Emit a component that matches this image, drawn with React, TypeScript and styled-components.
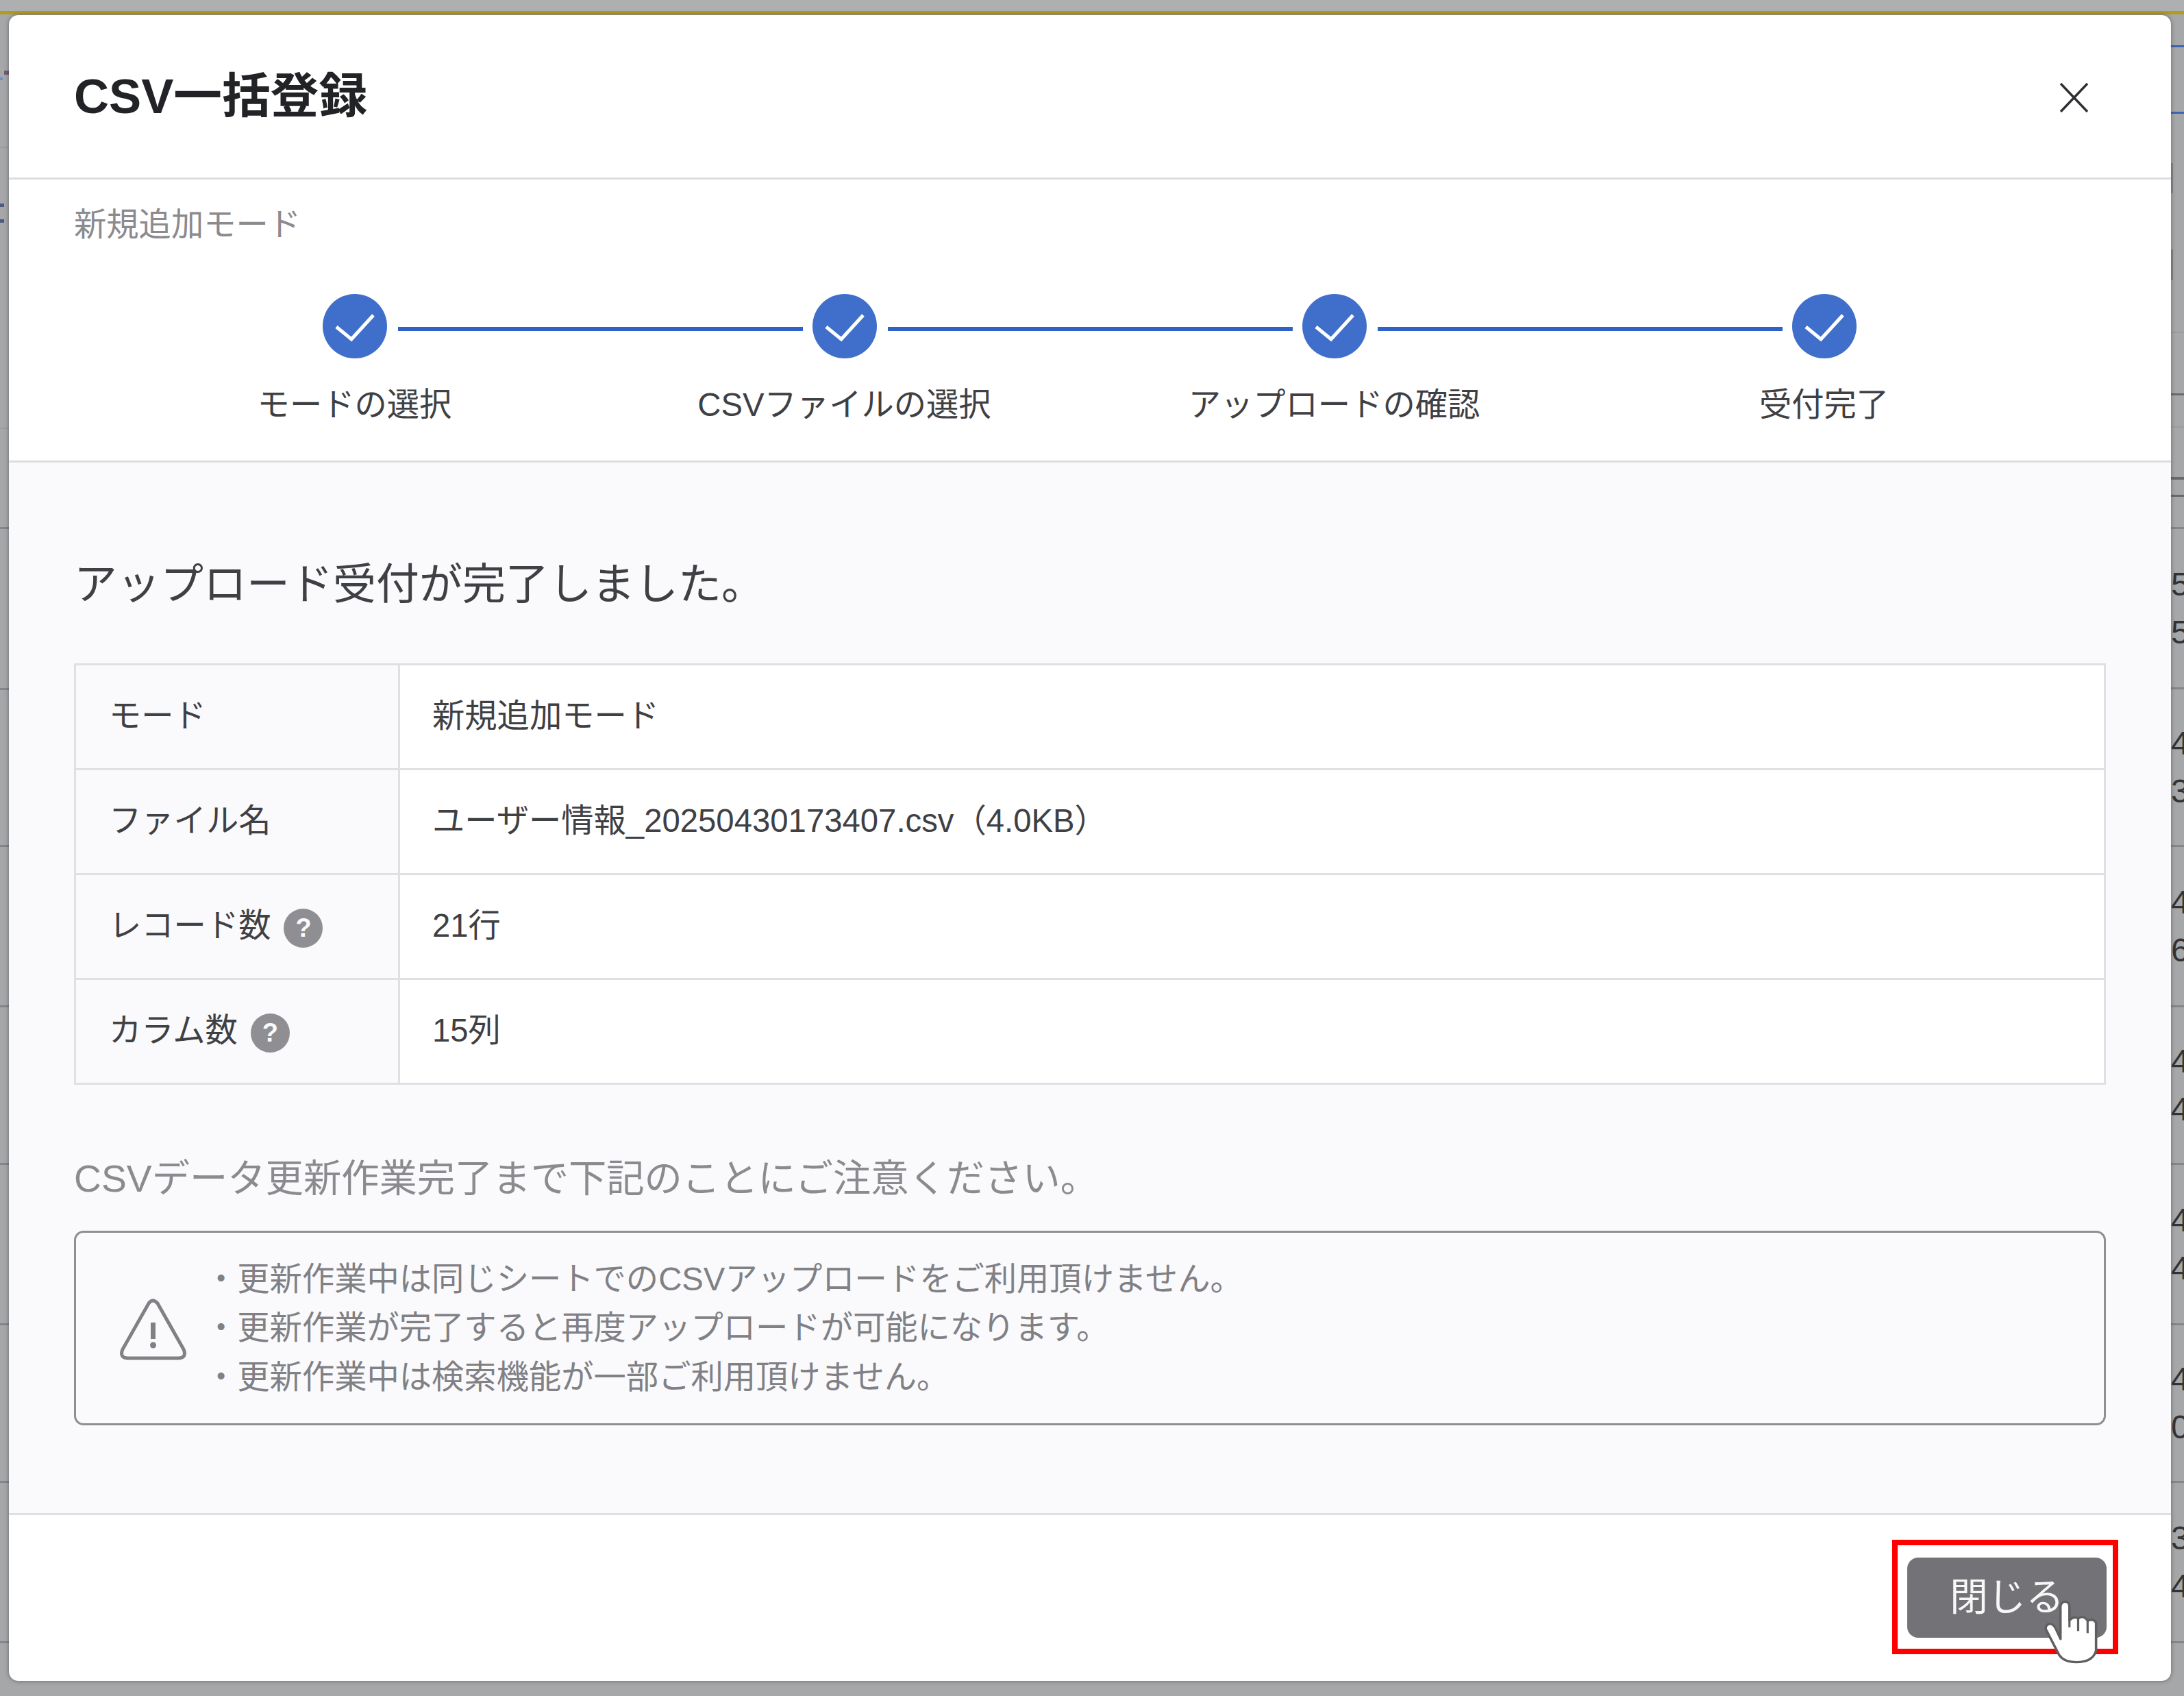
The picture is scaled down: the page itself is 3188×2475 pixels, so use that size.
// App.tsx
import styled, { createGlobalStyle } from 'styled-components';

const GlobalStyle = createGlobalStyle`
  html, body {
    margin: 0;
    padding: 0;
    background: #a6a7a9;
    overflow: hidden;
  }
  * {
    box-sizing: border-box;
  }
`;

const FONT = `"Liberation Sans", "Noto Sans CJK JP", sans-serif`;

const Backdrop = styled.div`
  position: relative;
  width: 3188px;
  height: 2475px;
  overflow: hidden;
  display: flex;
  flex-direction: column;
  background: #a6a7a9;
  font-family: ${FONT};
`;

const TopStrip = styled.div`
  height: 16px;
  background: #aeafb1;
`;

const GoldLine = styled.div`
  height: 5px;
  background: #b39b1e;
`;

const Rails = styled.div`
  flex: 1;
  display: flex;
  justify-content: space-between;
`;

const Rail = styled.div<{ $width: number }>`
  width: ${(p) => p.$width}px;
  display: flex;
  flex-direction: column;
  overflow: hidden;
`;

const Segment = styled.div<{ $height: number; $tick?: boolean }>`
  height: ${(p) => p.$height}px;
  display: flex;
  flex-direction: column;
  border-left: ${(p) => (p.$tick ? '3px solid #88898b' : 'none')};
`;

const Digits = styled.div`
  flex: 1;
  display: flex;
  flex-direction: column;
  justify-content: center;
  font-size: 48px;
  line-height: 70px;
  color: #333336;
`;

const Rule = styled.div<{ $color: string; $size: number; $width?: number; $right?: boolean }>`
  height: ${(p) => p.$size}px;
  width: ${(p) => (p.$width ? `${p.$width}px` : '100%')};
  margin-left: ${(p) => (p.$right ? 'auto' : '0')};
  margin-top: auto;
  background: ${(p) => p.$color};
  flex-shrink: 0;
`;

const Modal = styled.div`
  position: absolute;
  left: 13px;
  top: 22px;
  width: 3156px;
  height: 2431px;
  display: flex;
  flex-direction: column;
  background: #fff;
  border-radius: 14px;
  box-shadow: 0 0 6px rgba(50, 50, 55, 0.55);
  overflow: hidden;
`;

const Header = styled.header`
  height: 240px;
  flex-shrink: 0;
  display: flex;
  align-items: flex-start;
  justify-content: space-between;
  padding: 91px 121px 0 95px;
  border-bottom: 3px solid #dcdde0;
`;

const Title = styled.h1`
  margin: 0;
  font-size: 70.7px;
  line-height: 56px;
  font-weight: 700;
  color: #222326;
`;

const CloseButton = styled.button`
  width: 41px;
  height: 43px;
  margin-top: 8px;
  padding: 0;
  border: none;
  background: none;
  display: block;
`;

const StepSection = styled.section`
  height: 413px;
  flex-shrink: 0;
  border-bottom: 3px solid #dcdde0;
`;

const ModeName = styled.div`
  padding: 36px 0 0 95px;
  font-size: 47.3px;
  line-height: 60px;
  color: #8a8a8f;
`;

const Track = styled.div`
  display: flex;
  align-items: center;
  margin-top: 71px;
  padding-left: 458px;
`;

const StepDot = styled.svg`
  width: 94px;
  height: 94px;
  flex-shrink: 0;
`;

const Connector = styled.div`
  width: 591px;
  height: 6px;
  margin: 7px 14px 0 16px;
  background: #2f62c6;
`;

const StepLabels = styled.div`
  display: grid;
  grid-template-columns: repeat(4, 715px);
  margin-top: 38px;
  padding-left: 147px;
`;

const StepLabel = styled.div`
  text-align: center;
  font-size: 47.3px;
  line-height: 60px;
  color: #3f4044;
`;

const Body = styled.main`
  flex: 1;
  padding: 137px 95px 0 95px;
  background: #fafafc;
`;

const Lead = styled.h2`
  margin: 0;
  font-size: 63px;
  font-weight: 400;
  line-height: 80px;
  color: #3f4044;
`;

const InfoTable = styled.table`
  width: 100%;
  margin-top: 76px;
  border-collapse: collapse;
  table-layout: fixed;
  border: 3px solid #dfe0e4;
`;

const LabelCell = styled.th`
  width: 473px;
  height: 153px;
  padding: 0 0 12px 48px;
  border: 3px solid #dfe0e4;
  background: #fafafc;
  text-align: left;
  font-size: 47.3px;
  font-weight: 400;
  color: #3f4044;
`;

const LabelInner = styled.span`
  display: inline-flex;
  align-items: center;
  gap: 19px;
`;

const ValueCell = styled.td`
  padding: 0 0 12px 47px;
  border: 3px solid #dfe0e4;
  background: #fff;
  font-size: 47.3px;
  color: #3f4044;
`;

const HelpBadge = styled.span`
  width: 57px;
  height: 57px;
  margin-top: 17px;
  border-radius: 50%;
  background: #8e8e93;
  color: #fafafc;
  display: inline-flex;
  align-items: center;
  justify-content: center;
  font-size: 38px;
  font-weight: 700;
`;

const NoteTitle = styled.p`
  margin: 97px 0 0;
  font-size: 55.3px;
  line-height: 80px;
  color: #8a8a8f;
`;

const WarningBox = styled.div`
  height: 284px;
  margin-top: 36px;
  padding-left: 64px;
  display: flex;
  align-items: center;
  gap: 27px;
  border: 3px solid #8e8e93;
  border-radius: 14px;
`;

const WarningIcon = styled.svg`
  width: 97px;
  height: 90px;
  flex-shrink: 0;
  margin-top: 4px;
`;

const WarningList = styled.div`
  font-size: 47.3px;
  line-height: 71.5px;
  color: #808085;
`;

const Footer = styled.footer`
  height: 245px;
  flex-shrink: 0;
  display: flex;
  justify-content: flex-end;
  align-items: flex-start;
  padding: 36px 77px 0 0;
  border-top: 3px solid #dfe0e4;
`;

const Highlight = styled.div`
  position: relative;
  width: 330px;
  height: 167px;
  padding: 18px 9px 16px 14px;
  border: 8px solid #ff0000;
`;

const CloseAction = styled.button`
  display: block;
  width: 291px;
  height: 117px;
  padding: 0 0 11px;
  border: none;
  border-radius: 16px;
  background: #737377;
  color: #f7f7f7;
  font-family: ${FONT};
  font-size: 55.5px;
`;

const Pointer = styled.svg`
  position: absolute;
  left: 213px;
  top: 79px;
  width: 83px;
  height: 95px;
`;

type Line = {
  to: number;
  color?: string;
  size?: number;
  width?: number;
  right?: boolean;
  tick?: boolean;
  digits?: string[];
};

const TABLE_LINE = '#85868a';

const leftLines: Line[] = [
  { to: 109, color: '#6f5d70', size: 6, width: 7, right: true },
  { to: 117, color: '#6f8fc4', size: 4, width: 4 },
  { to: 216, color: '#9b9c9e', size: 2 },
  { to: 302, color: '#4b5a84', size: 5, width: 6 },
  { to: 325, color: '#4b5a84', size: 5, width: 6 },
  { to: 626, color: '#9b9c9e', size: 2 },
  { to: 772, color: TABLE_LINE, size: 3 },
  { to: 1007, color: TABLE_LINE, size: 3 },
  { to: 1236, color: TABLE_LINE, size: 3 },
  { to: 1470, color: TABLE_LINE, size: 3 },
  { to: 1700, color: TABLE_LINE, size: 3 },
  { to: 1934, color: TABLE_LINE, size: 3 },
  { to: 2164, color: TABLE_LINE, size: 3 },
  { to: 2398, color: TABLE_LINE, size: 3 },
];

const rightLines: Line[] = [
  { to: 69, color: '#3d63b5', size: 3 },
  { to: 166, color: '#3d63b5', size: 3 },
  { to: 238 },
  { to: 282, tick: true },
  { to: 364 },
  { to: 409, tick: true },
  { to: 486, color: '#9b9c9e', size: 2 },
  { to: 577, color: '#6a6b6d', size: 3 },
  { to: 624, color: '#9b9c9e', size: 2 },
  { to: 700, color: '#69696b', size: 4 },
  { to: 725, color: '#69696b', size: 3 },
  { to: 772, color: TABLE_LINE, size: 3 },
  { to: 1006, color: TABLE_LINE, size: 3, digits: ['5', '5'] },
  { to: 1236, color: TABLE_LINE, size: 3, digits: ['4', '3'] },
  { to: 1470, color: TABLE_LINE, size: 3, digits: ['4', '6'] },
  { to: 1700, color: TABLE_LINE, size: 3, digits: ['4', '4'] },
  { to: 1934, color: TABLE_LINE, size: 3, digits: ['4', '4'] },
  { to: 2164, color: TABLE_LINE, size: 3, digits: ['4', '0'] },
  { to: 2398, color: TABLE_LINE, size: 3, digits: ['3', '4'] },
];

const RailLines = ({ lines }: { lines: Line[] }) => {
  let prev = 21;
  return (
    <>
      {lines.map((line) => {
        const height = line.to - prev;
        prev = line.to;
        return (
          <Segment key={line.to} $height={height} $tick={line.tick}>
            {line.digits && (
              <Digits>
                {line.digits.map((d, i) => (
                  <span key={i}>{d}</span>
                ))}
              </Digits>
            )}
            {line.color && (
              <Rule $color={line.color} $size={line.size || 2} $width={line.width} $right={line.right} />
            )}
          </Segment>
        );
      })}
    </>
  );
};

const CheckDot = () => (
  <StepDot viewBox="0 0 94 94">
    <circle cx="47" cy="47" r="47" fill="#3f6ecb" />
    <path d="M20 48 L42 66 L74 31" fill="none" stroke="#fff" strokeWidth="5" />
  </StepDot>
);

const steps = ['モードの選択', 'CSVファイルの選択', 'アップロードの確認', '受付完了'];

const notes = [
  '・更新作業中は同じシートでのCSVアップロードをご利用頂けません。',
  '・更新作業が完了すると再度アップロードが可能になります。',
  '・更新作業中は検索機能が一部ご利用頂けません。',
];

const App = () => {
  return (
    <Backdrop>
      <GlobalStyle />
      <TopStrip />
      <GoldLine />
      <Rails>
        <Rail $width={13}>
          <RailLines lines={leftLines} />
        </Rail>
        <Rail $width={19}>
          <RailLines lines={rightLines} />
        </Rail>
      </Rails>

      <Modal>
        <Header>
          <Title>CSV一括登録</Title>
          <CloseButton aria-label="閉じる">
            <svg width="41" height="43" viewBox="0 0 41 43">
              <path d="M1 1 L40 42 M40 1 L1 42" stroke="#2e2f33" strokeWidth="3.5" fill="none" />
            </svg>
          </CloseButton>
        </Header>

        <StepSection>
          <ModeName>新規追加モード</ModeName>
          <Track>
            <CheckDot />
            <Connector />
            <CheckDot />
            <Connector />
            <CheckDot />
            <Connector />
            <CheckDot />
          </Track>
          <StepLabels>
            {steps.map((s) => (
              <StepLabel key={s}>{s}</StepLabel>
            ))}
          </StepLabels>
        </StepSection>

        <Body>
          <Lead>アップロード受付が完了しました。</Lead>
          <InfoTable>
            <tbody>
              <tr>
                <LabelCell>モード</LabelCell>
                <ValueCell>新規追加モード</ValueCell>
              </tr>
              <tr>
                <LabelCell>ファイル名</LabelCell>
                <ValueCell>ユーザー情報_20250430173407.csv（4.0KB）</ValueCell>
              </tr>
              <tr>
                <LabelCell>
                  <LabelInner>
                    レコード数<HelpBadge>?</HelpBadge>
                  </LabelInner>
                </LabelCell>
                <ValueCell>21行</ValueCell>
              </tr>
              <tr>
                <LabelCell>
                  <LabelInner>
                    カラム数<HelpBadge>?</HelpBadge>
                  </LabelInner>
                </LabelCell>
                <ValueCell>15列</ValueCell>
              </tr>
            </tbody>
          </InfoTable>

          <NoteTitle>CSVデータ更新作業完了まで下記のことにご注意ください。</NoteTitle>
          <WarningBox>
            <WarningIcon viewBox="0 0 97 90">
              <path
                d="M42 7 Q48 -1 55 7 L93 74 Q98 86 86 87 L11 87 Q-1 86 4 74 Z"
                fill="none"
                stroke="#808085"
                strokeWidth="5"
              />
              <rect x="45" y="35" width="7" height="24" fill="#808085" />
              <circle cx="48.5" cy="68" r="4.5" fill="#808085" />
            </WarningIcon>
            <WarningList>
              {notes.map((n) => (
                <div key={n}>{n}</div>
              ))}
            </WarningList>
          </WarningBox>
        </Body>

        <Footer>
          <Highlight>
            <CloseAction>閉じる</CloseAction>
            <Pointer viewBox="975 550 235 280" preserveAspectRatio="none">
              <path
                d="M1045 720 L1045 580 Q1048 560 1065 560 Q1082 562 1082 580 L1082 640 Q1100 620 1118 632 Q1140 615 1158 642 Q1180 630 1192 650 L1192 770 Q1180 820 1110 820 Q1060 820 1040 790 L985 680 Q980 660 1000 655 Q1015 655 1025 675 Z"
                fill="#fff"
                stroke="#5f5f61"
                strokeWidth="10"
                strokeLinejoin="round"
              />
              <path
                d="M1082 640 L1082 670 M1118 632 L1118 686 M1157 642 L1157 695"
                fill="none"
                stroke="#5f5f61"
                strokeWidth="9"
              />
            </Pointer>
          </Highlight>
        </Footer>
      </Modal>
    </Backdrop>
  );
};

export default App;
